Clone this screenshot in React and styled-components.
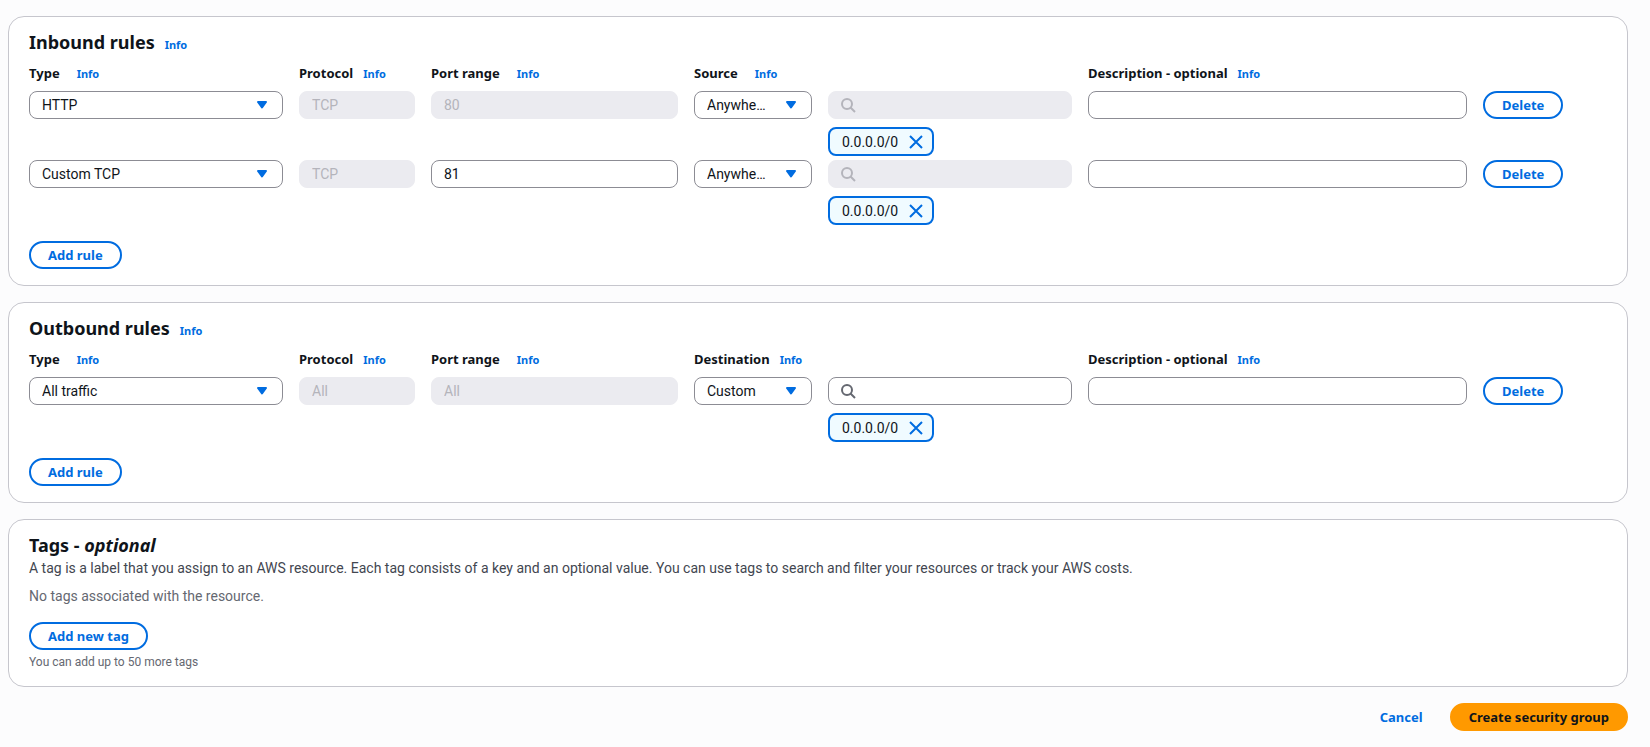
import React from "react";
import styled, { createGlobalStyle } from "styled-components";

const color = {
  page: "#fcfcfd",
  surface: "#ffffff",
  cardBorder: "#c6c6cd",
  fieldBorder: "#8c8c94",
  disabled: "#ebebf0",
  disabledText: "#b4b4bb",
  accent: "#006ce0",
  tokenFill: "#f0fbff",
  primary: "#ff9900",
  text: "#0f141a",
  textBody: "#424650",
  textMuted: "#656871",
};

const bodyFont = 'Roboto, "Open Sans", sans-serif';
const strongFont = '"Noto Sans", "Open Sans", sans-serif';

const GlobalStyle = createGlobalStyle`
  *, *::before, *::after { box-sizing: border-box; }
  body {
    margin: 0;
    background: ${color.page};
    color: ${color.text};
    font: 400 14px/20px ${bodyFont};
  }
`;

const Page = styled.main`
  display: flex;
  flex-direction: column;
  gap: 16px;
  padding: 16px 22px 16px 8px;
`;

const Card = styled.section`
  padding: 12px 20px 16px;
  background: ${color.surface};
  border: 1px solid ${color.cardBorder};
  border-radius: 16px;
`;

const CardHeader = styled.header`
  display: flex;
  align-items: baseline;
  gap: 10px;
`;

const Title = styled.h2`
  margin: 0;
  font: 700 18px/26px ${strongFont};
`;

const InfoLink = styled.a`
  color: ${color.accent};
  font: 700 11px/16px ${strongFont};
  text-decoration: none;
`;

const RulesGrid = styled.div`
  display: grid;
  grid-template-columns:
    minmax(0, 254fr) minmax(0, 116fr) minmax(0, 247fr) minmax(0, 118fr)
    minmax(0, 244fr) minmax(0, 379fr) minmax(0, 124fr);
  column-gap: 16px;
  row-gap: 4px;
  align-items: start;
  padding-bottom: 16px;
`;

const ColumnHead = styled.div`
  grid-column: span ${(p) => p.$span || 1};
  display: flex;
  align-items: baseline;
  gap: ${(p) => (p.$loose ? 17 : 10)}px;
  padding: 8px 0 4px;
  white-space: nowrap;
`;

const Label = styled.label`
  font: 700 13px/20px ${strongFont};
`;

const Field = styled.input`
  display: block;
  width: 100%;
  height: 28px;
  padding: 0 12px;
  color: ${color.text};
  background: ${color.surface};
  border: 1px solid ${color.fieldBorder};
  border-radius: 8px;
  font: inherit;

  &:disabled {
    color: ${color.disabledText};
    background: ${color.disabled};
    border-color: ${color.disabled};
  }
`;

const IconField = styled.div`
  position: relative;
`;

const SearchInput = styled(Field)`
  padding-left: 36px;
`;

const Select = styled(Field).attrs({ as: "select" })`
  appearance: none;
  padding-right: 44px;
  overflow: hidden;
  text-overflow: ellipsis;
  white-space: nowrap;
`;

const FieldIcon = styled.svg`
  position: absolute;
  top: 6px;
  ${(p) => (p.$side === "left" ? "left: 12px;" : "right: 13px;")}
  width: 16px;
  height: 16px;
  color: ${(p) => p.$tone};
  pointer-events: none;
`;

const SourceCell = styled.div`
  display: flex;
  flex-direction: column;
  align-items: stretch;
  gap: 8px;
`;

const Token = styled.span`
  display: flex;
  align-items: center;
  align-self: flex-start;
  gap: 10px;
  height: 29px;
  padding: 0 8px 0 12px;
  background: ${color.tokenFill};
  border: 2px solid ${color.accent};
  border-radius: 8px;
`;

const DismissButton = styled.button`
  display: flex;
  padding: 0;
  color: ${color.accent};
  background: none;
  border: 0;
  cursor: pointer;
`;

const Button = styled.button`
  height: 28px;
  padding: 0 17px;
  color: ${(p) => (p.$primary ? color.text : color.accent)};
  background: ${(p) => (p.$primary ? color.primary : p.$plain ? "transparent" : color.surface)};
  border: 2px solid
    ${(p) => (p.$primary ? color.primary : p.$plain ? "transparent" : color.accent)};
  border-radius: 20px;
  font: 700 13px/20px ${strongFont};
  white-space: nowrap;
  cursor: pointer;
`;

const Description = styled.p`
  margin: 0 0 8px;
  color: ${color.textBody};
`;

const EmptyText = styled.p`
  margin: 0 0 16px;
  color: ${color.textMuted};
`;

const Hint = styled.p`
  margin: 4px 0 0;
  color: ${color.textMuted};
  font-size: 12px;
  line-height: 16px;
`;

const Actions = styled.footer`
  display: flex;
  justify-content: flex-end;
  gap: 8px;
`;

function Dropdown({ id, labelledBy, value, options }) {
  return (
    <IconField>
      <Select id={id} aria-labelledby={labelledBy} defaultValue={value}>
        {options.map((option) => (
          <option key={option}>{option}</option>
        ))}
      </Select>
      <FieldIcon viewBox="0 0 16 16" $side="right" $tone={color.accent} aria-hidden="true">
        <path
          d="M4 5h8l-4 5.4z"
          fill="currentColor"
          stroke="currentColor"
          strokeWidth="2"
          strokeLinejoin="round"
        />
      </FieldIcon>
    </IconField>
  );
}

function Search({ disabled, labelledBy }) {
  return (
    <IconField>
      <SearchInput type="search" disabled={disabled} aria-labelledby={labelledBy} />
      <FieldIcon
        viewBox="0 0 16 16"
        $side="left"
        $tone={disabled ? color.disabledText : color.textMuted}
        aria-hidden="true"
      >
        <g fill="none" stroke="currentColor" strokeWidth="2">
          <circle cx="7" cy="7" r="5" />
          <path d="m15 15-4.5-4.5" />
        </g>
      </FieldIcon>
    </IconField>
  );
}

function CidrToken({ value }) {
  return (
    <Token>
      {value}
      <DismissButton type="button" aria-label={`Remove ${value}`}>
        <svg width="16" height="16" viewBox="0 0 16 16" aria-hidden="true">
          <path d="m2 2 12 12M14 2 2 14" stroke="currentColor" strokeWidth="2" />
        </svg>
      </DismissButton>
    </Token>
  );
}

const typeOptions = ["HTTP", "Custom TCP", "All traffic"];
const peerOptions = ["Anywhere-IPv4", "Custom"];

function RulesCard({ id, title, peerLabel, rules }) {
  const columns = [
    { key: "type", text: "Type", loose: true },
    { key: "protocol", text: "Protocol" },
    { key: "port", text: "Port range", loose: true },
    { key: "peer", text: peerLabel, loose: peerLabel === "Source", span: 2 },
    { key: "description", text: "Description - optional", span: 2 },
  ];
  const label = (key) => `${id}-${key}-label`;
  const field = (key, row) => `${id}-${key}-${row}`;

  return (
    <Card>
      <CardHeader>
        <Title>{title}</Title>
        <InfoLink href="#info">Info</InfoLink>
      </CardHeader>
      <RulesGrid>
        {columns.map((c) => (
          <ColumnHead key={c.key} $loose={c.loose} $span={c.span}>
            <Label id={label(c.key)} htmlFor={field(c.key, 0)}>
              {c.text}
            </Label>
            <InfoLink href="#info">Info</InfoLink>
          </ColumnHead>
        ))}
        {rules.map((rule, row) => (
          <React.Fragment key={row}>
            <Dropdown
              id={field("type", row)}
              labelledBy={label("type")}
              value={rule.type}
              options={typeOptions}
            />
            <Field
              id={field("protocol", row)}
              aria-labelledby={label("protocol")}
              defaultValue={rule.protocol}
              disabled
            />
            <Field
              id={field("port", row)}
              aria-labelledby={label("port")}
              defaultValue={rule.port}
              disabled={!rule.portEditable}
            />
            <Dropdown
              id={field("peer", row)}
              labelledBy={label("peer")}
              value={rule.peer}
              options={peerOptions}
            />
            <SourceCell>
              <Search disabled={rule.peer !== "Custom"} labelledBy={label("peer")} />
              <CidrToken value="0.0.0.0/0" />
            </SourceCell>
            <Field id={field("description", row)} aria-labelledby={label("description")} />
            <div>
              <Button type="button">Delete</Button>
            </div>
          </React.Fragment>
        ))}
      </RulesGrid>
      <Button type="button">Add rule</Button>
    </Card>
  );
}

const inboundRules = [
  { type: "HTTP", protocol: "TCP", port: "80", peer: "Anywhere-IPv4" },
  { type: "Custom TCP", protocol: "TCP", port: "81", portEditable: true, peer: "Anywhere-IPv4" },
];

const outboundRules = [{ type: "All traffic", protocol: "All", port: "All", peer: "Custom" }];

export default function App() {
  return (
    <>
      <GlobalStyle />
      <Page>
        <RulesCard id="inbound" title="Inbound rules" peerLabel="Source" rules={inboundRules} />
        <RulesCard
          id="outbound"
          title="Outbound rules"
          peerLabel="Destination"
          rules={outboundRules}
        />
        <Card>
          <Title>
            Tags - <em>optional</em>
          </Title>
          <Description>
            A tag is a label that you assign to an AWS resource. Each tag consists of a key and an
            optional value. You can use tags to search and filter your resources or track your AWS
            costs.
          </Description>
          <EmptyText>No tags associated with the resource.</EmptyText>
          <Button type="button">Add new tag</Button>
          <Hint>You can add up to 50 more tags</Hint>
        </Card>
        <Actions>
          <Button type="button" $plain>
            Cancel
          </Button>
          <Button type="button" $primary>
            Create security group
          </Button>
        </Actions>
      </Page>
    </>
  );
}
